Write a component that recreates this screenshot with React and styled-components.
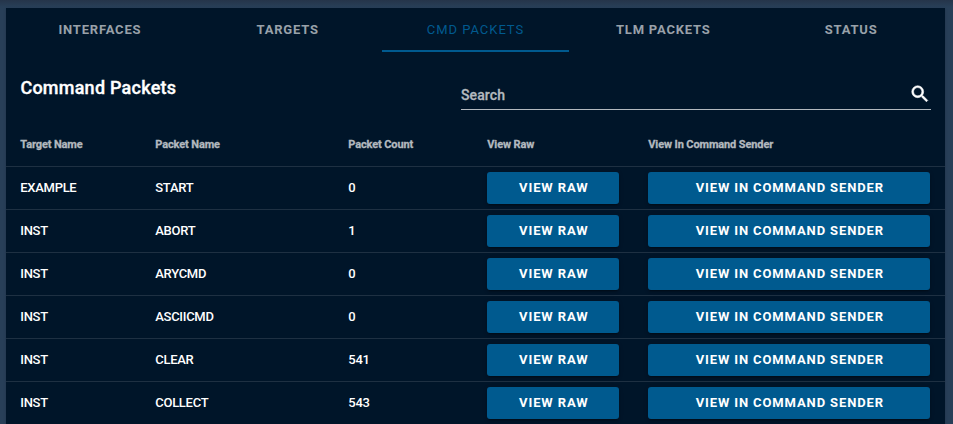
import React from "react";
import styled, { createGlobalStyle } from "styled-components";

const GlobalStyle = createGlobalStyle`
  * { box-sizing: border-box; }
  body {
    margin: 0;
    height: 424px;
    overflow: hidden;
    background: #283f58;
    color: #fff;
    font-family: Roboto, sans-serif;
  }
`;

const Page = styled.main`
  height: 424px;
  padding: 8px 8px 0 6px;
  overflow: hidden;
  background: linear-gradient(#25354a, #283f58 7px);
`;

const Card = styled.section`
  height: 440px;
  background: #001529;
  box-shadow: 0 2px 1px -1px rgba(0, 0, 0, 0.2), 0 1px 1px rgba(0, 0, 0, 0.14),
    0 1px 3px rgba(0, 0, 0, 0.12);
`;

const Tabs = styled.nav`
  display: grid;
  grid-template-columns: repeat(5, 1fr);
  height: 44px;
`;

const Tab = styled.button`
  padding: 2px 0 0;
  border: 0;
  border-bottom: 2px solid ${(p) => (p.$active ? "#005a8f" : "transparent")};
  background: none;
  color: ${(p) => (p.$active ? "#005a8f" : "#99a1a9")};
  font: ${(p) => (p.$active ? 400 : 700)} 13px/40px Roboto, sans-serif;
  letter-spacing: ${(p) => (p.$active ? "0.95px" : "0.8px")};
`;

const TitleBar = styled.header`
  display: flex;
  justify-content: space-between;
  height: 70px;
  padding: 0 14px;
`;

const Title = styled.h1`
  margin: 24px 0 0;
  padding-left: 0.4px;
  font-size: 18px;
  line-height: 24px;
  font-weight: 500;
  letter-spacing: 0.24px;
  -webkit-text-stroke: 0.35px currentColor;
`;

const SearchField = styled.label`
  display: flex;
  justify-content: space-between;
  align-items: center;
  width: 470px;
  height: 32px;
  margin-top: 26px;
  padding-top: 1px;
  border-bottom: 1px solid #b3b9bf;
  color: #b3b9bf;
  font-size: 14px;
  font-weight: 500;
  line-height: 18px;
  -webkit-text-stroke: 0.3px currentColor;
`;

const SearchLabel = styled.span`
  padding-top: 1px;
  letter-spacing: 0.1px;
`;

const SearchIcon = styled.svg`
  width: 22px;
  height: 22px;
  margin: -1px 0 0 0;
  fill: #fff;
  stroke: #fff;
  stroke-width: 0.6px;
`;

const Row = styled.div`
  display: grid;
  grid-template-columns: 135px 193px 139px 161px 1fr;
  align-items: center;
  height: ${(p) => (p.$header ? "44px" : "43px")};
  padding: 0 15px 0 14px;
  border-top: ${(p) => (p.$header ? "0" : "1px solid #1e3042")};
`;

const HeaderCell = styled.span`
  padding-left: 0.3px;
  color: #b3b9bf;
  font-size: 11px;
  font-weight: 700;
  letter-spacing: -0.12px;
  -webkit-text-stroke: 0.3px currentColor;
`;

const Cell = styled.span`
  padding: 0 0 2px 0.3px;
  font-size: 13px;
  font-weight: 500;
  letter-spacing: -0.3px;
`;

const ActionButton = styled.button`
  width: ${(p) => p.$width};
  height: 32px;
  padding: 0 0 0 1.6px;
  border: 0;
  border-radius: 3px;
  background: #005a8f;
  box-shadow: 0 3px 1px -2px rgba(0, 0, 0, 0.2), 0 2px 2px rgba(0, 0, 0, 0.14),
    0 1px 5px rgba(0, 0, 0, 0.12);
  color: #fff;
  font: 700 13px/32px Roboto, sans-serif;
  letter-spacing: 0.88px;
`;

const tabs = ["INTERFACES", "TARGETS", "CMD PACKETS", "TLM PACKETS", "STATUS"];
const columns = ["Target Name", "Packet Name", "Packet Count", "View Raw", "View In Command Sender"];
const packets = [
  ["EXAMPLE", "START", 0],
  ["INST", "ABORT", 1],
  ["INST", "ARYCMD", 0],
  ["INST", "ASCIICMD", 0],
  ["INST", "CLEAR", 541],
  ["INST", "COLLECT", 543],
];

export default function App() {
  return (
    <Page>
      <GlobalStyle />
      <Card>
        <Tabs>
          {tabs.map((t) => (
            <Tab key={t} $active={t === "CMD PACKETS"}>{t}</Tab>
          ))}
        </Tabs>
        <TitleBar>
          <Title>Command Packets</Title>
          <SearchField>
            <SearchLabel>Search</SearchLabel>
            <SearchIcon viewBox="0 0 24 24">
              <path d="M9.5,3A6.5,6.5 0 0,1 16,9.5C16,11.11 15.41,12.59 14.44,13.73L14.71,14H15.5L20.5,19L19,20.5L14,15.5V14.71L13.73,14.44C12.59,15.41 11.11,16 9.5,16A6.5,6.5 0 0,1 3,9.5A6.5,6.5 0 0,1 9.5,3M9.5,5C7,5 5,7 5,9.5C5,12 7,14 9.5,14C12,14 14,12 14,9.5C14,7 12,5 9.5,5Z" />
            </SearchIcon>
          </SearchField>
        </TitleBar>
        <Row $header>
          {columns.map((c) => (
            <HeaderCell key={c}>{c}</HeaderCell>
          ))}
        </Row>
        {packets.map(([target, packet, count]) => (
          <Row key={packet}>
            <Cell>{target}</Cell>
            <Cell>{packet}</Cell>
            <Cell>{count}</Cell>
            <ActionButton $width="132px">VIEW RAW</ActionButton>
            <ActionButton $width="282px">VIEW IN COMMAND SENDER</ActionButton>
          </Row>
        ))}
      </Card>
    </Page>
  );
}
